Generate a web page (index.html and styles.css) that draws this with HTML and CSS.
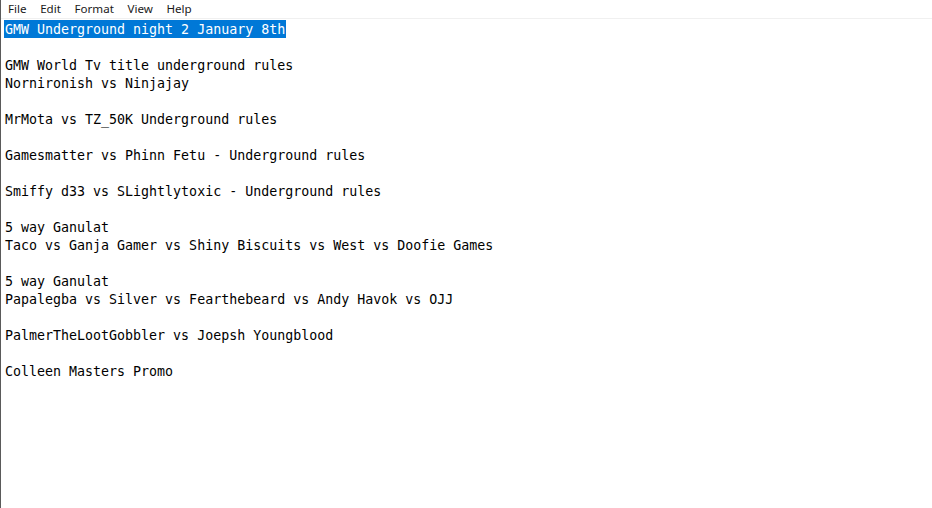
FILE: index.html
```html
<!DOCTYPE html>
<html>
<head>
<meta charset="utf-8">
<link rel="stylesheet" href="styles.css">
</head>
<body>
<div class="window">
  <div class="menubar">
    <span class="menu-item">File</span>
    <span class="menu-item">Edit</span>
    <span class="menu-item">Format</span>
    <span class="menu-item">View</span>
    <span class="menu-item">Help</span>
  </div>
  <div class="editor">
    <div class="line"><span class="selected">GMW Underground night 2 January 8th</span></div>
    <div class="line"></div>
    <div class="line">GMW World Tv title underground rules</div>
    <div class="line">Nornironish vs Ninjajay</div>
    <div class="line"></div>
    <div class="line">MrMota vs TZ_50K Underground rules</div>
    <div class="line"></div>
    <div class="line">Gamesmatter vs Phinn Fetu - Underground rules</div>
    <div class="line"></div>
    <div class="line">Smiffy d33 vs SLightlytoxic - Underground rules</div>
    <div class="line"></div>
    <div class="line">5 way Ganulat</div>
    <div class="line">Taco vs Ganja Gamer vs Shiny Biscuits vs West vs Doofie Games</div>
    <div class="line"></div>
    <div class="line">5 way Ganulat</div>
    <div class="line">Papalegba vs Silver vs Fearthebeard vs Andy Havok vs OJJ</div>
    <div class="line"></div>
    <div class="line">PalmerTheLootGobbler vs Joepsh Youngblood</div>
    <div class="line"></div>
    <div class="line">Colleen Masters Promo</div>
  </div>
</div>
</body>
</html>
```

FILE: styles.css
```css
html, body {
  margin: 0;
  padding: 0;
  background: #ffffff;
}
.window {
  width: 932px;
  height: 508px;
  box-sizing: border-box;
  border-left: 1px solid #5a5a5a;
  display: flex;
  flex-direction: column;
  overflow: hidden;
}
.menubar {
  height: 18px;
  border-bottom: 1px solid #f0f0f0;
  display: flex;
  align-items: center;
  font-family: "Noto Sans", "Open Sans", sans-serif;
  font-size: 11.6px;
  color: #1a1a1a;
  padding-left: 7px;
}
.menu-item {
  margin-right: 13.6px;
  line-height: 18px;
}
.editor {
  flex: 1;
  padding-top: 1px;
  padding-left: 4px;
  font-family: "DejaVu Sans Mono", "Liberation Mono", monospace;
  font-size: 13.3px;
  color: #000000;
}
.line {
  height: 18px;
  line-height: 20px;
  white-space: pre;
}
.selected {
  background: #0078d7;
  color: #ffffff;
  display: inline-block;
  vertical-align: top;
  line-height: 18px;
  height: 17px;
  padding: 1px 1px 0 1px;
  margin-left: -1px;
}
```
